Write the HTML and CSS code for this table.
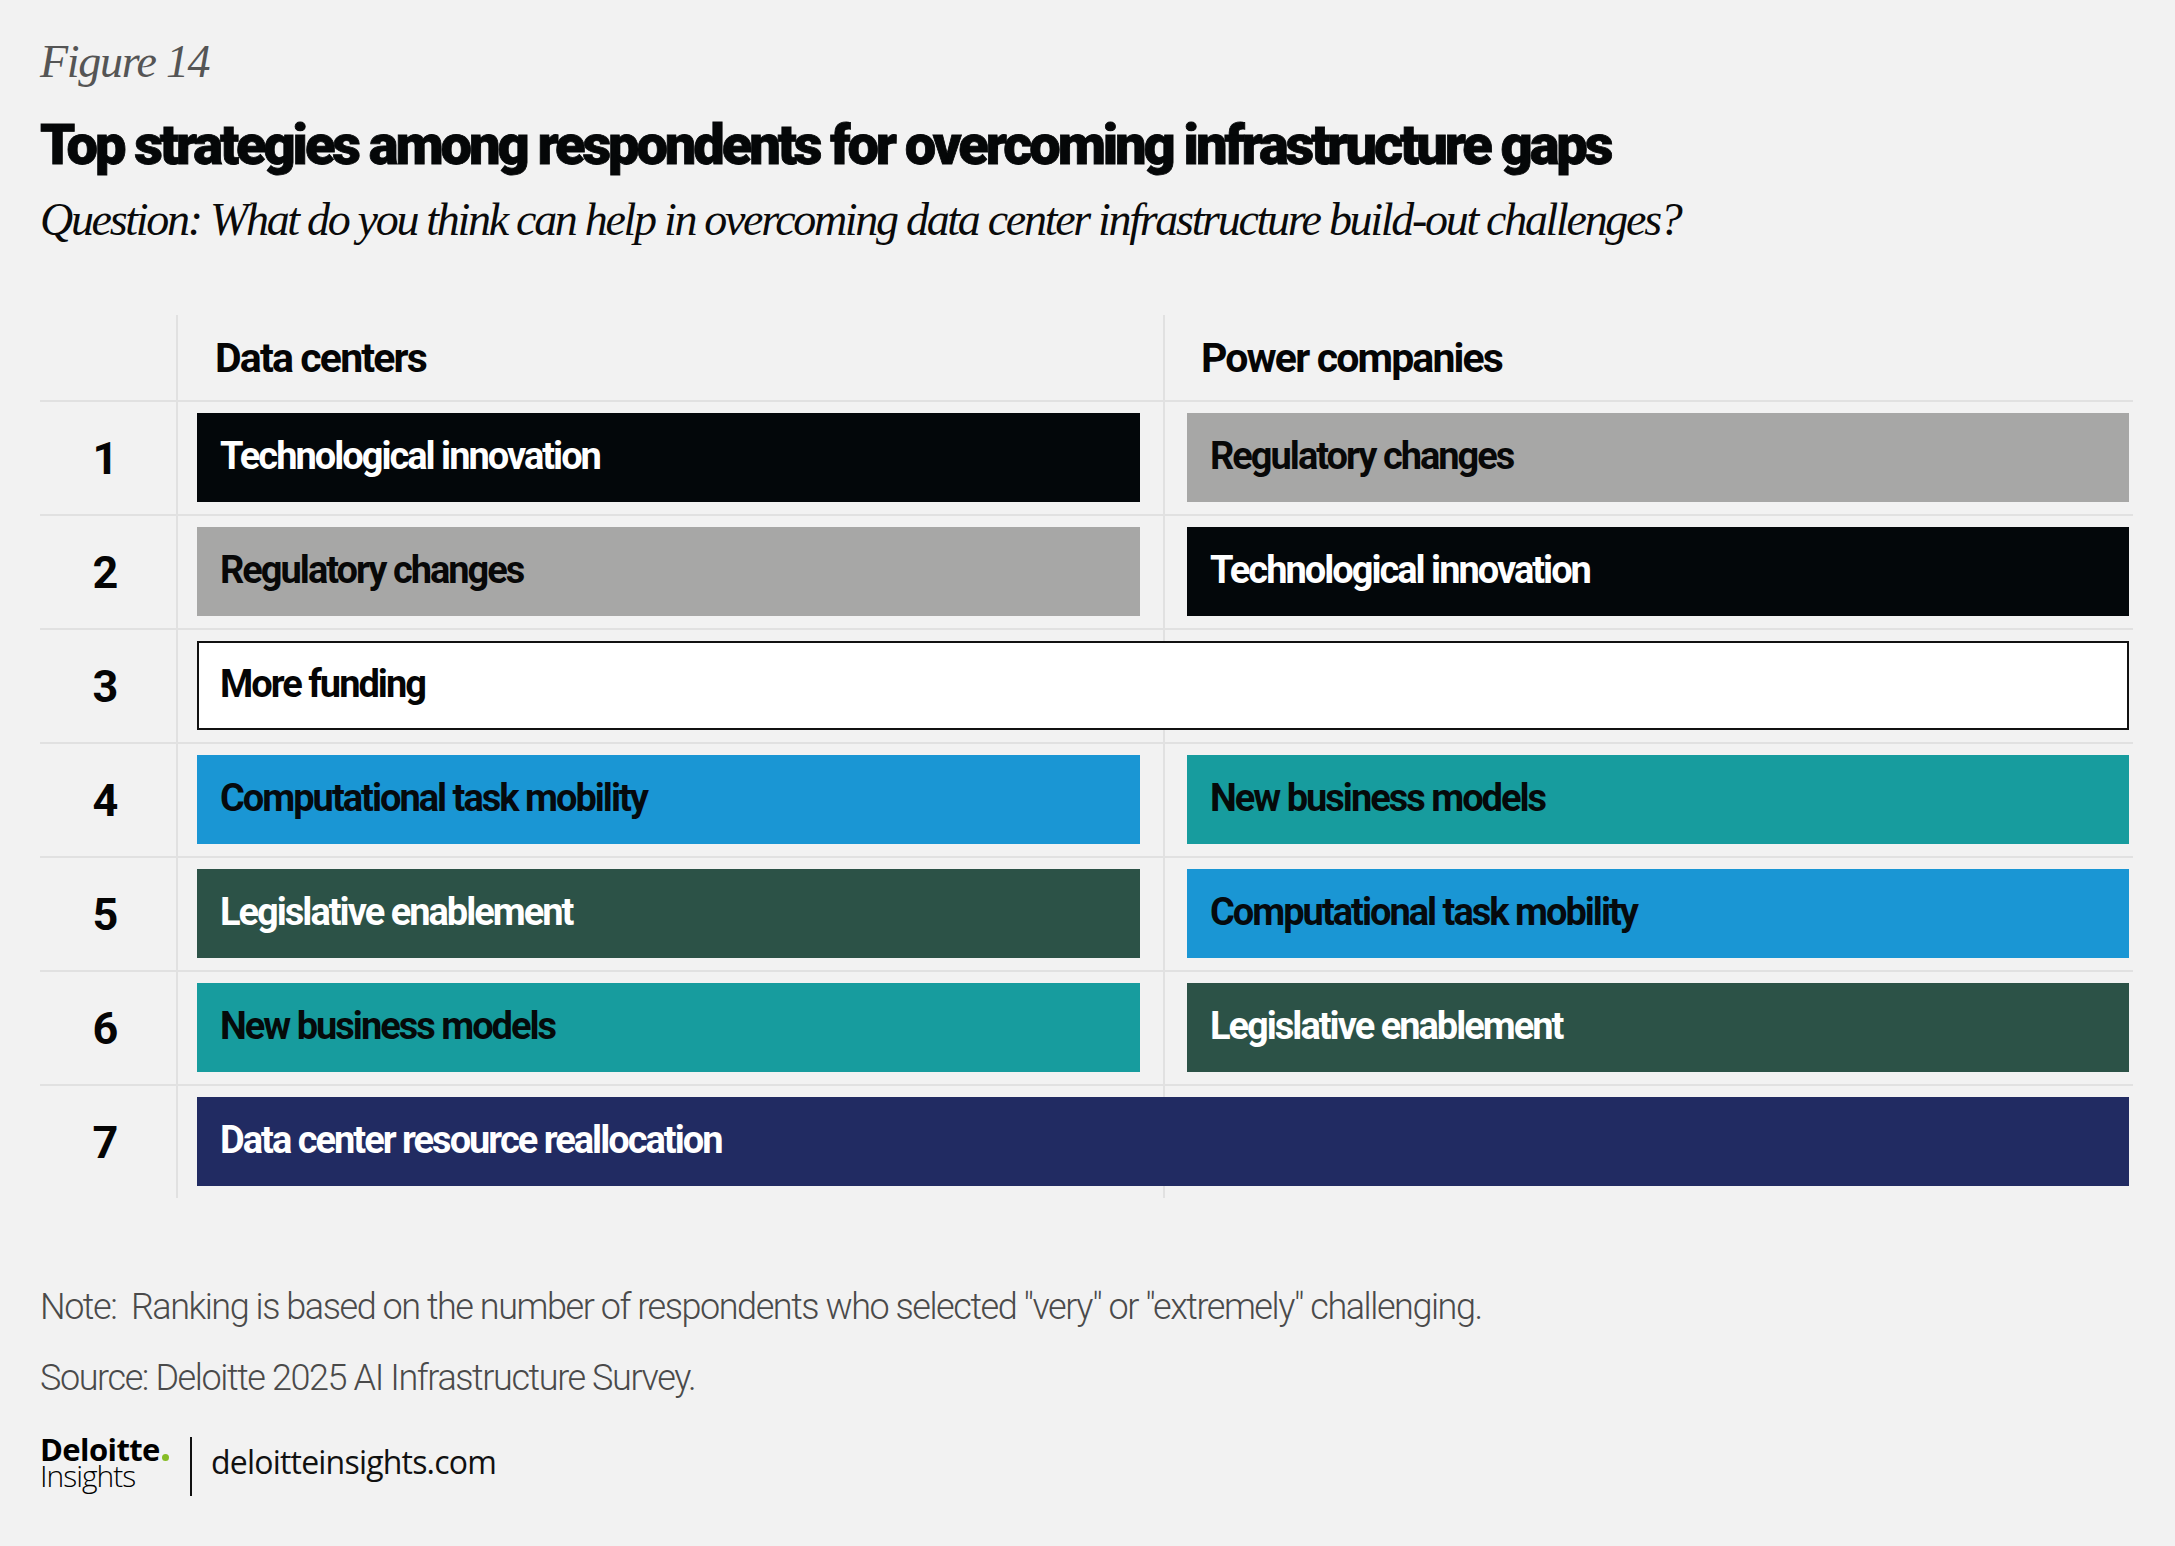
FILE: index.html
```html
<!DOCTYPE html>
<html lang="en">
<head>
<meta charset="utf-8">
<title>Figure 14</title>
<link rel="stylesheet" href="styles.css">
</head>
<body>
<div class="page">
  <div class="fig-label">Figure 14</div>
  <h1 class="title">Top strategies among respondents for overcoming infrastructure gaps</h1>
  <div class="question">Question: What do you think can help in overcoming data center infrastructure build-out challenges?</div>

  <div class="chart">
    <div class="row head">
      <div class="num"></div>
      <div class="cell"><span class="col-title">Data centers</span></div>
      <div class="cell"><span class="col-title">Power companies</span></div>
    </div>

    <div class="row">
      <div class="num">1</div>
      <div class="cell"><div class="bar black">Technological innovation</div></div>
      <div class="cell"><div class="bar gray">Regulatory changes</div></div>
    </div>

    <div class="row">
      <div class="num">2</div>
      <div class="cell"><div class="bar gray">Regulatory changes</div></div>
      <div class="cell"><div class="bar black">Technological innovation</div></div>
    </div>

    <div class="row">
      <div class="num">3</div>
      <div class="cell"></div>
      <div class="cell"></div>
      <div class="bar wide white">More funding</div>
    </div>

    <div class="row">
      <div class="num">4</div>
      <div class="cell"><div class="bar blue">Computational task mobility</div></div>
      <div class="cell"><div class="bar teal">New business models</div></div>
    </div>

    <div class="row">
      <div class="num">5</div>
      <div class="cell"><div class="bar green">Legislative enablement</div></div>
      <div class="cell"><div class="bar blue">Computational task mobility</div></div>
    </div>

    <div class="row">
      <div class="num">6</div>
      <div class="cell"><div class="bar teal">New business models</div></div>
      <div class="cell"><div class="bar green">Legislative enablement</div></div>
    </div>

    <div class="row">
      <div class="num">7</div>
      <div class="cell"></div>
      <div class="cell"></div>
      <div class="bar wide navy">Data center resource reallocation</div>
    </div>
  </div>

  <p class="note">Note:&nbsp; Ranking is based on the number of respondents who selected "very" or "extremely" challenging.</p>
  <p class="source">Source: Deloitte 2025 AI Infrastructure Survey.</p>

  <div class="brand">
    <div class="logo">
      <div class="logo-top">Deloitte<span class="dot"></span></div>
      <div class="logo-bottom">Insights</div>
    </div>
    <div class="divider"></div>
    <div class="url">deloitteinsights.com</div>
  </div>
</div>
</body>
</html>
```

FILE: styles.css
```css
* { box-sizing: border-box; }

html, body {
  margin: 0;
  padding: 0;
  background: #f2f2f2;
}

.page {
  width: 2175px;
  height: 1546px;
  padding: 34px 40px 0 40px;
  color: #050505;
  font-family: "Roboto", "Liberation Sans", sans-serif;
}

.fig-label {
  font-family: "Liberation Serif", serif;
  font-style: italic;
  font-size: 46px;
  line-height: 56px;
  letter-spacing: -1.3px;
  color: #555555;
}

.title {
  margin: 23px 0 0 0;
  font-family: "Roboto", "Liberation Sans", sans-serif;
  font-weight: 900;
  font-size: 56px;
  line-height: 64px;
  letter-spacing: -3.1px;
  -webkit-text-stroke: 0.8px #050708;
  color: #050708;
  white-space: nowrap;
}

.question {
  margin-top: 15px;
  font-family: "Liberation Serif", serif;
  font-style: italic;
  font-size: 46px;
  line-height: 56px;
  letter-spacing: -2.3px;
  color: #0a0a0a;
  white-space: nowrap;
}

/* chart */
.chart {
  margin-top: 67px;
  width: 2093px;
}

.row {
  display: grid;
  grid-template-columns: 136px 987px 970px;
  height: 114px;
  border-top: 2px solid #e1e1e1;
}

.row.head {
  height: 85px;
  border-top: none;
}

.num {
  grid-row: 1;
  grid-column: 1;
  display: flex;
  align-items: center;
  justify-content: center;
  padding-right: 6px;
  font-weight: 700;
  font-size: 45px;
  letter-spacing: -1px;
  color: #050505;
}

.cell {
  grid-row: 1;
  display: flex;
  align-items: center;
  border-left: 2px solid #e1e1e1;
}

.row .cell:nth-child(2) { grid-column: 2; padding: 11px 23px 12px 19px; }
.row .cell:nth-child(3) { grid-column: 3; padding: 11px 4px 12px 22px; }

.row.head .cell:nth-child(2) { padding: 0 0 0 37px; }
.row.head .cell:nth-child(3) { padding: 0 0 0 36px; }

.col-title {
  font-weight: 700;
  font-size: 41px;
  letter-spacing: -1.85px;
  color: #050505;
}

.bar {
  height: 89px;
  width: 100%;
  display: flex;
  align-items: center;
  padding: 0 0 4px 23px;
  font-weight: 700;
  font-size: 38px;
  letter-spacing: -2px;
  white-space: nowrap;
}

.bar.wide {
  grid-row: 1;
  grid-column: 2 / 4;
  margin: 11px 4px 12px 21px;
  width: auto;
  position: relative;
  z-index: 1;
}

.black { background: #03070a; color: #ffffff; }
.gray  { background: #a7a7a6; color: #080808; }
.white { background: #ffffff; color: #050505; border: 2px solid #111111; padding-left: 21px; }
.blue  { background: #1a96d4; color: #050a0e; }
.teal  { background: #179c9e; color: #050a0a; }
.green { background: #2c5247; color: #ffffff; }
.navy  { background: #212b62; color: #ffffff; }

/* footer */
.note {
  margin: 89px 0 0 0;
  font-weight: 300;
  font-size: 36px;
  line-height: 40px;
  letter-spacing: -1.45px;
  color: #4a4a4a;
  white-space: nowrap;
}

.source {
  margin: 31px 0 0 0;
  font-weight: 300;
  font-size: 36px;
  line-height: 40px;
  letter-spacing: -1.4px;
  color: #4a4a4a;
}

.brand {
  margin-top: 38px;
  display: flex;
  align-items: flex-start;
}

.logo {
  width: 150px;
  font-family: "Open Sans", "Liberation Sans", sans-serif;
  color: #000000;
}

.logo-top {
  font-weight: 700;
  font-size: 31px;
  line-height: 26px;
  letter-spacing: -0.6px;
}

.dot {
  display: inline-block;
  width: 7px;
  height: 7px;
  margin-left: 2px;
  border-radius: 50%;
  background: #86bc25;
}

.logo-bottom {
  font-weight: 300;
  font-size: 30px;
  line-height: 28px;
  letter-spacing: -1px;
}

.divider {
  margin-top: 1px;
  width: 2px;
  height: 59px;
  background: #111111;
}

.url {
  margin: 6px 0 0 19px;
  font-family: "Open Sans", "Liberation Sans", sans-serif;
  font-weight: 400;
  font-size: 32px;
  line-height: 40px;
  letter-spacing: -0.8px;
  color: #111111;
}
```
